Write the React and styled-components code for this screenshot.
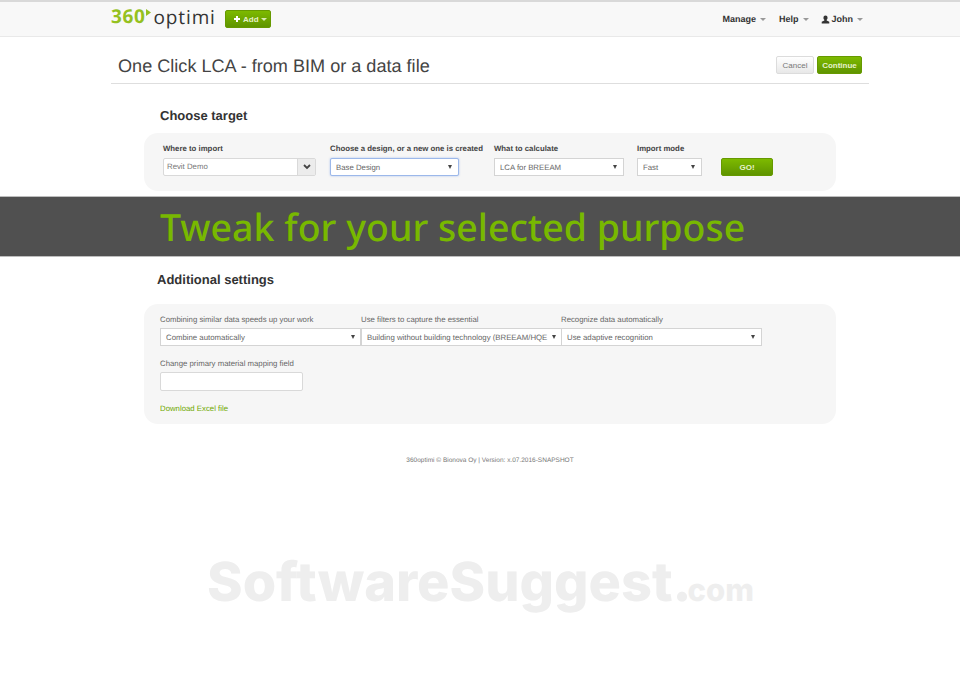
import React from "react";
import styled, { createGlobalStyle } from "styled-components";

const GlobalStyle = createGlobalStyle`
    html, body {
        margin: 0;
        padding: 0;
        background: #fff;
        font-family: "Liberation Sans", Arial, sans-serif;
        color: #333;
        text-rendering: geometricPrecision;
    }
`;

const Page = styled.div`
    width: 960px;
    height: 681px;
    overflow: hidden;
`;

const Navbar = styled.header`
    box-sizing: border-box;
    height: 37px;
    display: flex;
    align-items: center;
    justify-content: space-between;
    padding: 0 97px 0 111px;
    background: #f8f8f8;
    border-top: 2px solid #d9d9d9;
    border-bottom: 1px solid #e9e9e9;
`;

const NavLeft = styled.div`
    display: flex;
    align-items: center;
    gap: 12px;
`;

const Logo = styled.div`
    display: flex;
    align-items: flex-start;
    width: 102px;
    height: 24px;
    font-family: "Open Sans", sans-serif;
    font-size: 19px;
    line-height: 22px;
    letter-spacing: 0.6px;
    margin-top: -5px;
`;

const LogoNumber = styled.span`
    color: #95c11f;
    font-weight: 700;
`;

const LogoName = styled.span`
    color: #333;
    letter-spacing: 0.9px;
    margin-left: 2px;
    margin-top: 1px;
`;

const LogoArrow = styled.svg`
    width: 5px;
    height: 7px;
    margin: 4px 0 0 1px;
    flex: none;
`;

const AddButton = styled.button`
    box-sizing: border-box;
    display: flex;
    align-items: center;
    gap: 2px;
    width: 46px;
    height: 18px;
    padding: 0 0 0 7px;
    border: 1px solid #669900;
    border-radius: 2px;
    background: linear-gradient(#7dba00, #5f9400);
    color: #e6f2cc;
    font: bold 8px "Liberation Sans", sans-serif;
`;

const Menu = styled.nav`
    display: flex;
    align-items: center;
    gap: 13px;
`;

const MenuItem = styled.span`
    display: flex;
    align-items: center;
    gap: 4px;
    font-size: 9px;
    font-weight: 700;
    color: #333;
`;

const Caret = styled.i`
    width: 0;
    height: 0;
    border-left: 3px solid transparent;
    border-right: 3px solid transparent;
    border-top: 3px solid ${(p) => p.$color || "#999"};
`;

const UserIcon = styled.svg`
    width: 9px;
    height: 9px;
    margin: 0 -2px 0 -1px;
`;

const PageHead = styled.div`
    box-sizing: border-box;
    width: 758px;
    height: 47px;
    margin-left: 111px;
    padding: 0 7px;
    display: flex;
    align-items: flex-start;
    justify-content: space-between;
    border-bottom: 1px solid #dedede;
`;

const Title = styled.h1`
    margin: 17px 0 0;
    font-size: 18.1px;
    font-weight: 400;
    line-height: 25px;
    color: #444;
`;

const HeadButtons = styled.div`
    display: flex;
    gap: 3px;
    margin-top: 19px;
`;

const Button = styled.button`
    box-sizing: border-box;
    height: 18px;
    padding: 0;
    width: ${(p) => p.$width}px;
    border-radius: 2px;
    border: 1px solid ${(p) => (p.$primary ? "#669900" : "#dcdcdc")};
    background: ${(p) =>
        p.$primary ? "linear-gradient(#7dba00, #5f9400)" : "linear-gradient(#fff, #e8e8e8)"};
    color: ${(p) => (p.$primary ? "#e6f2cc" : "#777")};
    font: ${(p) => (p.$primary ? "bold " : "")}8px "Liberation Sans", sans-serif;
`;

const SectionTitle = styled.h2`
    margin: ${(p) => p.$margin};
    font-size: 13px;
    font-weight: 700;
    line-height: 16px;
    color: #333;
`;

const Panel = styled.section`
    box-sizing: border-box;
    width: 692px;
    margin-left: 144px;
    background: #f6f6f6;
    border-radius: 14px;
`;

const TargetPanel = styled(Panel)`
    height: 58px;
    margin-top: 9px;
    padding: 11px 0 0 19px;
    display: flex;
`;

const Field = styled.div`
    width: ${(p) => p.$width}px;
    flex: none;
`;

const Label = styled.div`
    font-size: 7.8px;
    line-height: 10px;
    height: ${(p) => (p.$bold ? 14 : 13)}px;
    white-space: nowrap;
    font-weight: ${(p) => (p.$bold ? 700 : 400)};
    color: ${(p) => (p.$bold ? "#444" : "#666")};
`;

const SelectBox = styled.div`
    box-sizing: border-box;
    height: 18px;
    width: ${(p) => p.$width}px;
    display: flex;
    align-items: center;
    justify-content: space-between;
    padding: 0 5px 0 5px;
    background: #fff;
    border: 1px solid ${(p) => (p.$focus ? "#9cb8ea" : "#d4d4d4")};
    box-shadow: ${(p) => (p.$focus ? "0 0 2px rgba(82,130,230,.5)" : "none")};
    border-radius: ${(p) => (p.$focus ? "2px" : "0")};
    font-size: 7.8px;
    color: #666;
    white-space: nowrap;
`;

const SelectText = styled.span`
    overflow: hidden;
    flex: 1;
    min-width: 0;
`;

const SelectCaret = styled.i`
    flex: none;
    margin-left: 3px;
    margin-right: ${(p) => p.$inset || 0}px;
    width: 0;
    height: 0;
    border-left: 2.5px solid transparent;
    border-right: 2.5px solid transparent;
    border-top: 4px solid #444;
`;

const Combo = styled.div`
    box-sizing: border-box;
    width: 153px;
    height: 18px;
    display: flex;
    background: #fff;
    border: 1px solid #d9d9d9;
    border-radius: 2px;
    font-size: 7.8px;
    color: #777;
`;

const ComboText = styled.span`
    flex: 1;
    line-height: 16px;
    padding-left: 3px;
`;

const ComboButton = styled.span`
    width: 17px;
    display: flex;
    align-items: center;
    justify-content: center;
    background: #ececec;
    border-left: 1px solid #d9d9d9;
`;

const GoButton = styled(Button)`
    width: 52px;
    margin: 14px 0 0 19px;
`;

const Band = styled.div`
    box-sizing: border-box;
    height: 61px;
    margin-top: 5px;
    padding-left: 160px;
    background: #505050;
    border-top: 1px solid #bdbdbd;
    border-bottom: 1px solid #bdbdbd;
    font-family: "Noto Sans", sans-serif;
    font-weight: 500;
    font-size: 37.5px;
    line-height: 59px;
    color: #78b800;
    white-space: nowrap;
`;

const SettingsPanel = styled(Panel)`
    height: 120px;
    margin-top: 16px;
    padding: 11px 0 0 16px;
`;

const SettingsRow = styled.div`
    display: flex;
`;

const BlankInput = styled.div`
    box-sizing: border-box;
    width: 143px;
    height: 19px;
    background: #fff;
    border: 1px solid #d9d9d9;
    border-radius: 2px;
`;

const SecondRow = styled.div`
    margin-top: 13px;
`;

const DownloadLink = styled.a`
    display: block;
    margin-top: 13px;
    font-size: 7.8px;
    line-height: 10px;
    color: #6fa800;
`;

const Footer = styled.footer`
    margin: 32px 0 0 20px;
    text-align: center;
    font-size: 6.5px;
    line-height: 9px;
    color: #777;
`;

const Watermark = styled.div`
    margin: 88px 0 0 207px;
    font-family: Inter, sans-serif;
    font-weight: 800;
    font-size: 54px;
    line-height: 60px;
    color: #eeeeee;
    white-space: nowrap;
`;

const WatermarkTld = styled.span`
    font-size: 31px;
    margin-left: -4px;
`;

const Select = ({ width, focus, inset, children }) => (
    <SelectBox $width={width} $focus={focus}>
        <SelectText>{children}</SelectText>
        <SelectCaret $inset={inset} />
    </SelectBox>
);

const App = () => (
    <Page>
        <GlobalStyle />
        <Navbar>
            <NavLeft>
                <Logo>
                    <LogoNumber>360</LogoNumber>
                    <LogoArrow viewBox="0 0 5 7">
                        <polygon points="0,0 5,3.5 0,7" fill="#95c11f" />
                    </LogoArrow>
                    <LogoName>optimi</LogoName>
                </Logo>
                <AddButton>
                    <svg width="8" height="8" viewBox="0 0 8 8">
                        <path d="M3 1h2v2h2v2H5v2H3V5H1V3h2z" fill="#fff" />
                    </svg>
                    Add
                    <Caret $color="#d9ecb3" />
                </AddButton>
            </NavLeft>
            <Menu>
                <MenuItem>Manage <Caret /></MenuItem>
                <MenuItem>Help <Caret /></MenuItem>
                <MenuItem>
                    <UserIcon viewBox="0 0 10 10">
                        <path d="M5 0.5a2.3 2.5 0 0 1 2.3 2.6c0 1-.5 1.8-1 2.2v.9l2.9 1.3V9.5H.8V7.5l2.9-1.3v-.9c-.5-.4-1-1.2-1-2.2A2.3 2.5 0 0 1 5 .5z" fill="#333" />
                    </UserIcon>
                    John <Caret />
                </MenuItem>
            </Menu>
        </Navbar>

        <PageHead>
            <Title>One Click LCA - from BIM or a data file</Title>
            <HeadButtons>
                <Button $width={38}>Cancel</Button>
                <Button $width={45} $primary>Continue</Button>
            </HeadButtons>
        </PageHead>

        <SectionTitle $margin="24px 0 0 160px">Choose target</SectionTitle>
        <TargetPanel>
            <Field $width={167}>
                <Label $bold>Where to import</Label>
                <Combo>
                    <ComboText>Revit Demo</ComboText>
                    <ComboButton>
                        <svg width="8" height="6" viewBox="0 0 8 6">
                            <path d="M1 1l3 3 3-3" fill="none" stroke="#444" strokeWidth="1.8" />
                        </svg>
                    </ComboButton>
                </Combo>
            </Field>
            <Field $width={164}>
                <Label $bold>Choose a design, or a new one is created</Label>
                <Select width={129} focus inset={1}>Base Design</Select>
            </Field>
            <Field $width={143}>
                <Label $bold>What to calculate</Label>
                <Select width={130} inset={1}>LCA for BREEAM</Select>
            </Field>
            <Field $width={65}>
                <Label $bold>Import mode</Label>
                <Select width={65} inset={1}>Fast</Select>
            </Field>
            <GoButton $primary>GO!</GoButton>
        </TargetPanel>

        <Band>Tweak for your selected purpose</Band>

        <SectionTitle $margin="15px 0 0 157px">Additional settings</SectionTitle>
        <SettingsPanel>
            <SettingsRow>
                <Field $width={201}>
                    <Label>Combining similar data speeds up your work</Label>
                    <Select width={201}>Combine automatically</Select>
                </Field>
                <Field $width={200}>
                    <Label>Use filters to capture the essential</Label>
                    <Select width={201}>Building without building technology (BREEAM/HQE</Select>
                </Field>
                <Field $width={201}>
                    <Label>Recognize data automatically</Label>
                    <Select width={201} inset={1}>Use adaptive recognition</Select>
                </Field>
            </SettingsRow>
            <SecondRow>
                <Label>Change primary material mapping field</Label>
                <BlankInput />
            </SecondRow>
            <DownloadLink>Download Excel file</DownloadLink>
        </SettingsPanel>

        <Footer>360optimi © Bionova Oy | Version: x.07.2016-SNAPSHOT</Footer>

        <Watermark>SoftwareSuggest.<WatermarkTld>com</WatermarkTld></Watermark>
    </Page>
);

export default App;
